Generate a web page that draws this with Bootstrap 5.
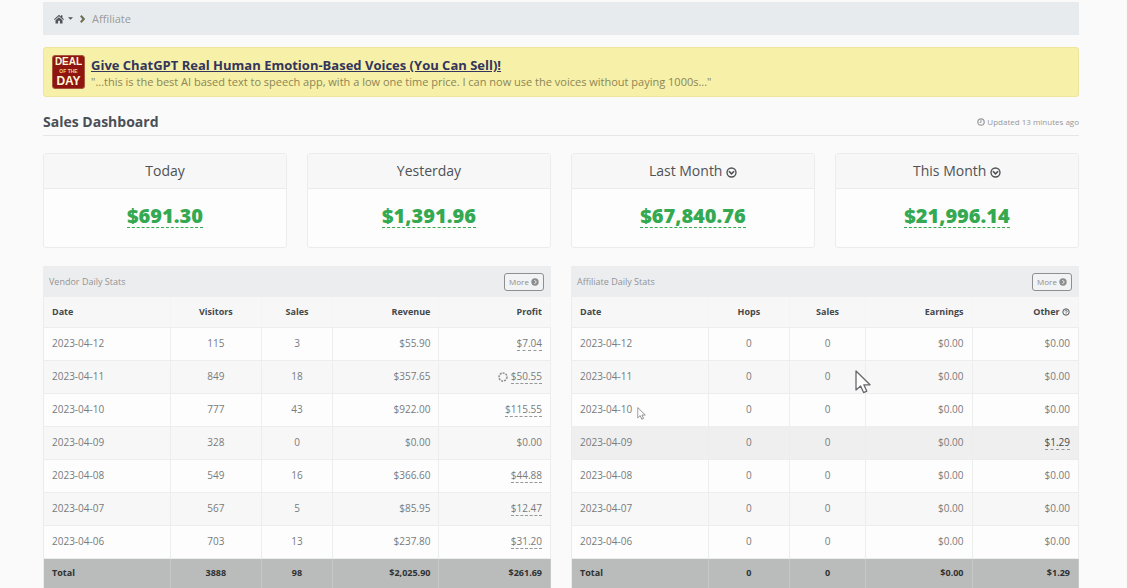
<!DOCTYPE html>
<html lang="en">
<head>
<meta charset="utf-8">
<meta name="viewport" content="width=device-width, initial-scale=1">
<title>Affiliate - Sales Dashboard</title>
<link rel="stylesheet" href="https://cdn.jsdelivr.net/npm/bootstrap@5.3.0/dist/css/bootstrap.min.css">
<style>
  body { background: #fafafa; color: #777b7d; font-family: "Open Sans", "Noto Sans", sans-serif; font-size: 10px; line-height: 16px; overflow-x: hidden; }
  svg { display: inline-block; flex: none; }
  .page-wrap { padding: 2px 48px 0 43px; }
  .crumb-bar { background: #e8ebee; height: 33px; padding: 0 11px; gap: 7px; font-size: 11px; color: #999b98; }
  .crumb-bar button { color: #50555a; }
  .deal { background: #f7f0a8; border: 1px solid #ede59a; border-radius: 3px; margin-top: 12px; padding: 7px 8px; gap: 6px; height: 50px; }
  .deal-logo { width: 33px; height: 34px; background: #8f1510; border: 1px solid #a8573a; border-radius: 3px; color: #fff8d8; font-family: "Liberation Sans", sans-serif; font-weight: 700; text-align: center; }
  .deal-logo span { display: block; font-size: 10px; line-height: 12px; }
  .deal-logo .deal-mid { font-size: 5px; line-height: 6px; color: #efd08a; }
  .deal-logo .deal-day { font-size: 12px; line-height: 14px; }
  .deal a { font-size: 13px; font-weight: 700; color: #33355c; line-height: 18px; padding-top: 1px; }
  .deal p { font-size: 11px; color: #8c8655; line-height: 16px; }
  .section-title { border-bottom: 1px solid #e6e6e6; height: 39px; padding-top: 11px; margin-bottom: 17px; }
  .section-title h1 { font-size: 14px; font-weight: 700; line-height: 28px; color: #4b4f57; }
  .updated { font-size: 8px; gap: 2px; color: #96989a; }
  .stats-row { --bs-gutter-x: 20px; }
  .stat { background: #fdfdfd; border: 1px solid #ececec; border-radius: 3px; height: 95px; text-align: center; }
  .stat h2 { background: #f7f7f7; border-bottom: 1px solid #ebebeb; font-size: 14px; font-weight: 400; line-height: 34px; color: #4f5254; }
  .stat a { display: inline-block; font-size: 20px; font-weight: 800; line-height: 22px; color: #35a951; text-decoration: none; border-bottom: 1px dashed #35a951; }
  .panel-head { background: #ecedef; height: 31px; padding: 0 7px 0 6px; font-size: 9px; color: #929496; margin-top: 18px; }
  .more { font-size: 8px; line-height: 16px; color: #8b8d8f; background: #f2f3f4; border: 1px solid #8d8f91; border-radius: 3px; width: 40px; height: 18px; gap: 2px; }
  .daily { --bs-table-bg: transparent; font-size: 10px; line-height: 16px; color: #777b7d; table-layout: fixed; border: 1px solid #ebebeb; border-top: 0; }
  .daily th, .daily td { height: 33px; padding: 0 8px 2px; vertical-align: middle; border: 0 solid #eceeee; border-width: 0 1px 1px 0; color: inherit; box-shadow: none; }
  .daily thead th { height: 30px; padding-bottom: 0; background: #f7f7f7; color: #45484b; font-size: 9px; border-right-color: #f4f4f4; }
  .daily tbody tr { background: #fdfdfd; }
  .daily tbody tr:nth-child(even) { background: #f7f7f7; }
  .daily tbody tr.picked { background: #efefef; }
  .daily tbody th { font-weight: 400; }
  .daily tfoot tr { background: #babbbb; color: #2f3132; font-weight: 700; font-size: 9px; }
  .daily tfoot th, .daily tfoot td { height: 30px; padding-bottom: 0; border-color: #c6c7c7; }
  .daily td:nth-child(n+4), .daily th:nth-child(n+4) { text-align: right; }
  .daily td:nth-child(2), .daily th:nth-child(2), .daily td:nth-child(3), .daily th:nth-child(3) { text-align: center; }
  .daily a { color: inherit; text-decoration: none; border-bottom: 1px dashed #96999b; }
  .daily .picked a { color: #45484b; }
  .pointer-lg { position: absolute; left: 56%; top: 73px; }
  .pointer-sm { position: absolute; left: 13%; top: 110px; }
</style>
</head>
<body>
<svg width="0" height="0" class="position-absolute" aria-hidden="true">
  <symbol id="i-down" viewBox="0 0 12 12"><circle cx="6" cy="6" r="4.9" fill="none" stroke="currentColor" stroke-width="1.5"/><path d="M3.2 4.6 6 7.400l2.800-2.800" fill="none" stroke="currentColor" stroke-width="1.800"/></symbol>
  <symbol id="i-go" viewBox="0 0 12 12"><circle cx="6" cy="6" r="5.5" fill="currentColor"/><path d="m5 3 3 3-3 3" fill="none" stroke="#f2f3f4" stroke-width="1.5"/></symbol>
  <symbol id="i-help" viewBox="0 0 12 12"><circle cx="6" cy="6" r="4.8" fill="none" stroke="currentColor" stroke-width="1.4"/><path d="M4.3 5c0-2.3 3.5-2 3.5-.2C7.800 6 6 5.900 6 7.200M6 8.300v1" fill="none" stroke="currentColor" stroke-width="1.2"/></symbol>
  <symbol id="i-clock" viewBox="0 0 12 12"><circle cx="6" cy="6" r="4.8" fill="none" stroke="currentColor" stroke-width="1.8"/><path d="M6 2.800V6.500H3.800" fill="none" stroke="currentColor" stroke-width="1.5"/></symbol>
  <symbol id="i-pointer" viewBox="0 0 16 24"><path d="M1 1v19l4.600-4 3 6.600 3.200-1.500-3-6.300H15z" fill="#fff" stroke="#66686b" stroke-width="1.300" stroke-linejoin="round"/></symbol>
</svg>

<main class="page-wrap">
  <nav class="crumb-bar d-flex align-items-center" aria-label="Breadcrumb">
    <button type="button" class="btn p-0 border-0 d-flex align-items-center gap-1" aria-label="Home menu">
      <svg width="10" height="10" viewBox="0 0 12 12" fill="currentColor"><path d="M6 .8 0 6.200l.9 1L6 2.700l5.100 4.500.9-1-1.900-1.700V1.500H8.400V3z"/><path d="M6 3.800 1.800 7.500V11.500H4.900V8.200H7.100v3.300h3.100v-4z"/></svg>
      <svg width="5" height="3" viewBox="0 0 6 3" fill="currentColor"><path d="M0 0h6L3 3z"/></svg>
    </button>
    <svg width="5" height="8" viewBox="0 0 5 8"><path d="m.8.8 3 3.200-3 3.200" fill="none" stroke="#6b6d50" stroke-width="2"/></svg>
    <span>Affiliate</span>
  </nav>

  <section class="deal d-flex">
    <div class="deal-logo flex-shrink-0"><span>DEAL</span><span class="deal-mid">OF THE</span><span class="deal-day">DAY</span></div>
    <div>
      <a href="#" class="d-block">Give ChatGPT Real Human Emotion-Based Voices (You Can Sell)!</a>
      <p class="mb-0">"...this is the best AI based text to speech app, with a low one time price. I can now use the voices without paying 1000s..."</p>
    </div>
  </section>

  <header class="section-title d-flex justify-content-between">
    <h1 class="mb-0">Sales Dashboard</h1>
    <span class="updated d-flex align-items-center"><svg width="8" height="8"><use href="#i-clock"/></svg>Updated 13 minutes ago</span>
  </header>

  <section class="row stats-row">
    <div class="col-3"><div class="stat"><h2 class="mb-3">Today</h2><a href="#">$691.30</a></div></div>
    <div class="col-3"><div class="stat"><h2 class="mb-3">Yesterday</h2><a href="#">$1,391.96</a></div></div>
    <div class="col-3"><div class="stat"><h2 class="mb-3">Last Month <svg width="11" height="11"><use href="#i-down"/></svg></h2><a href="#">$67,840.76</a></div></div>
    <div class="col-3"><div class="stat"><h2 class="mb-3">This Month <svg width="11" height="11"><use href="#i-down"/></svg></h2><a href="#">$21,996.14</a></div></div>
  </section>

  <section class="row stats-row">
    <div class="col-6">
      <div class="panel-head d-flex align-items-center justify-content-between">Vendor Daily Stats
        <button type="button" class="more p-0 d-flex align-items-center justify-content-center">More<svg width="8" height="8"><use href="#i-go"/></svg></button></div>
      <table class="table daily mb-0">
        <colgroup><col style="width:25%"><col style="width:18%"><col style="width:14%"><col style="width:21%"><col style="width:22%"></colgroup>
        <thead><tr><th>Date</th><th>Visitors</th><th>Sales</th><th>Revenue</th><th>Profit</th></tr></thead>
        <tbody>
          <tr><th>2023-04-12</th><td>115</td><td>3</td><td>$55.90</td><td><a href="#">$7.04</a></td></tr>
          <tr><th>2023-04-11</th><td>849</td><td>18</td><td>$357.65</td><td><svg width="10" height="10" viewBox="0 0 10 10"><circle cx="5" cy="5" r="4" fill="none" stroke="#8b8e90" stroke-width="1.500" stroke-dasharray="2 1"/></svg> <a href="#">$50.55</a></td></tr>
          <tr><th>2023-04-10</th><td>777</td><td>43</td><td>$922.00</td><td><a href="#">$115.55</a></td></tr>
          <tr><th>2023-04-09</th><td>328</td><td>0</td><td>$0.00</td><td>$0.00</td></tr>
          <tr><th>2023-04-08</th><td>549</td><td>16</td><td>$366.60</td><td><a href="#">$44.88</a></td></tr>
          <tr><th>2023-04-07</th><td>567</td><td>5</td><td>$85.95</td><td><a href="#">$12.47</a></td></tr>
          <tr><th>2023-04-06</th><td>703</td><td>13</td><td>$237.80</td><td><a href="#">$31.20</a></td></tr>
        </tbody>
        <tfoot><tr><th>Total</th><td>3888</td><td>98</td><td>$2,025.90</td><td>$261.69</td></tr></tfoot>
      </table>
    </div>
    <div class="col-6">
      <div class="panel-head d-flex align-items-center justify-content-between">Affiliate Daily Stats
        <button type="button" class="more p-0 d-flex align-items-center justify-content-center">More<svg width="8" height="8"><use href="#i-go"/></svg></button></div>
      <div class="position-relative">
      <table class="table daily mb-0">
        <colgroup><col style="width:27%"><col style="width:16%"><col style="width:15%"><col style="width:21%"><col style="width:21%"></colgroup>
        <thead><tr><th>Date</th><th>Hops</th><th>Sales</th><th>Earnings</th><th>Other <svg width="8" height="8"><use href="#i-help"/></svg></th></tr></thead>
        <tbody>
          <tr><th>2023-04-12</th><td>0</td><td>0</td><td>$0.00</td><td>$0.00</td></tr>
          <tr><th>2023-04-11</th><td>0</td><td>0</td><td>$0.00</td><td>$0.00</td></tr>
          <tr><th>2023-04-10</th><td>0</td><td>0</td><td>$0.00</td><td>$0.00</td></tr>
          <tr class="picked"><th>2023-04-09</th><td>0</td><td>0</td><td>$0.00</td><td><a href="#">$1.29</a></td></tr>
          <tr><th>2023-04-08</th><td>0</td><td>0</td><td>$0.00</td><td>$0.00</td></tr>
          <tr><th>2023-04-07</th><td>0</td><td>0</td><td>$0.00</td><td>$0.00</td></tr>
          <tr><th>2023-04-06</th><td>0</td><td>0</td><td>$0.00</td><td>$0.00</td></tr>
        </tbody>
        <tfoot><tr><th>Total</th><td>0</td><td>0</td><td>$0.00</td><td>$1.29</td></tr></tfoot>
      </table>
      <svg class="pointer-lg" width="16" height="24"><use href="#i-pointer"/></svg>
      <svg class="pointer-sm" width="9" height="13" viewBox="0 0 16 24"><use href="#i-pointer"/></svg>
      </div>
    </div>
  </section>
</main>
<script src="https://cdn.jsdelivr.net/npm/bootstrap@5.3.0/dist/js/bootstrap.bundle.min.js"></script>
</body>
</html>
